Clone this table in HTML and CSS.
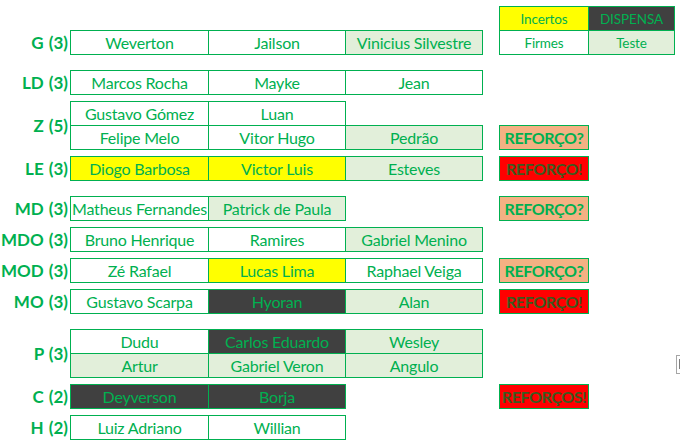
FILE: index.html
```html
<!DOCTYPE html>
<html lang="pt">
<head>
<meta charset="utf-8">
<title>Elenco</title>
<link rel="stylesheet" href="styles.css">
</head>
<body>
<div class="sheet">
  <div class="grp">
    <div class="blank"></div><div class="blank"></div><div class="blank"></div><div class="blank"></div><div class="blank"></div>
    <div class="cell leg yellow">Incertos</div>
    <div class="cell leg dark">DISPENSA</div>
    <div class="label">G (3)</div>
    <div class="cell">Weverton</div>
    <div class="cell">Jailson</div>
    <div class="cell light">Vinicius Silvestre</div>
    <div class="blank"></div>
    <div class="cell leg">Firmes</div>
    <div class="cell leg light">Teste</div>
  </div>

  <div class="grp gap16">
    <div class="label">LD (3)</div>
    <div class="cell">Marcos Rocha</div>
    <div class="cell">Mayke</div>
    <div class="cell">Jean</div>
  </div>

  <div class="grp gap7">
    <div class="label span2">Z (5)</div>
    <div class="cell">Gustavo Gómez</div>
    <div class="cell">Luan</div>
    <div class="blank"></div>
    <div class="blank"></div><div class="blank"></div><div class="blank"></div>
    <div class="cell">Felipe Melo</div>
    <div class="cell">Vitor Hugo</div>
    <div class="cell light">Pedrão</div>
    <div class="ref orange">REFORÇO?</div>
  </div>

  <div class="grp gap7">
    <div class="label">LE (3)</div>
    <div class="cell yellow">Diogo Barbosa</div>
    <div class="cell yellow">Victor Luis</div>
    <div class="cell light">Esteves</div>
    <div class="ref red">REFORÇO!</div>
  </div>

  <div class="grp gap16">
    <div class="label">MD (3)</div>
    <div class="cell">Matheus Fernandes</div>
    <div class="cell light">Patrick de Paula</div>
    <div class="blank"></div>
    <div class="ref orange">REFORÇO?</div>
  </div>

  <div class="grp gap7">
    <div class="label">MDO (3)</div>
    <div class="cell">Bruno Henrique</div>
    <div class="cell">Ramires</div>
    <div class="cell light">Gabriel Menino</div>
  </div>

  <div class="grp gap7">
    <div class="label">MOD (3)</div>
    <div class="cell">Zé Rafael</div>
    <div class="cell yellow">Lucas Lima</div>
    <div class="cell">Raphael Veiga</div>
    <div class="ref orange">REFORÇO?</div>
  </div>

  <div class="grp gap7">
    <div class="label">MO (3)</div>
    <div class="cell">Gustavo Scarpa</div>
    <div class="cell dark">Hyoran</div>
    <div class="cell light">Alan</div>
    <div class="ref red">REFORÇO!</div>
  </div>

  <div class="grp gap16">
    <div class="label span2">P (3)</div>
    <div class="cell">Dudu</div>
    <div class="cell dark">Carlos Eduardo</div>
    <div class="cell light">Wesley</div>
    <div class="blank"></div><div class="blank"></div><div class="blank"></div>
    <div class="cell light">Artur</div>
    <div class="cell light">Gabriel Veron</div>
    <div class="cell light">Angulo</div>
  </div>

  <div class="grp gap7">
    <div class="label">C (2)</div>
    <div class="cell dark">Deyverson</div>
    <div class="cell dark">Borja</div>
    <div class="blank"></div>
    <div class="ref red">REFORÇOS!</div>
  </div>

  <div class="grp gap7">
    <div class="label">H (2)</div>
    <div class="cell">Luiz Adriano</div>
    <div class="cell">Willian</div>
  </div>
</div>
<div class="paste"><span class="clip"></span></div>
</body>
</html>
```

FILE: styles.css
```css
html, body {
  margin: 0;
  padding: 0;
  background: #ffffff;
}
body {
  width: 680px;
  height: 446px;
  overflow: hidden;
  position: relative;
  font-family: Lato, "Open Sans", sans-serif;
  color: #00b050;
}
.sheet {
  display: flex;
  flex-direction: column;
  padding-top: 6px;
}
.grp {
  display: grid;
  grid-template-columns: 70px 138px 137px 137px 17px 89px 86px;
  grid-auto-rows: 24px;
}
.gap16 { margin-top: 16px; }
.gap7 { margin-top: 7px; }

.label {
  grid-column: 1;
  font-weight: bold;
  font-size: 17px;
  white-space: pre;
  display: flex;
  align-items: center;
  justify-content: flex-end;
  padding-right: 2px;
  word-spacing: 1px;
}
.label.span2 { grid-row: span 2; }

.cell {
  border: 1px solid #00b050;
  margin: 0 -1px -1px 0;
  background: #ffffff;
  display: flex;
  align-items: center;
  justify-content: center;
  font-size: 16px;
  letter-spacing: -0.2px;
  white-space: nowrap;
  overflow: hidden;
}
.cell.leg { font-size: 13.5px; letter-spacing: -0.1px; }
.yellow { background: #ffff00; }
.dark { background: #404040; }
.light { background: #e2efda; }

.ref {
  grid-column: 6;
  border: 1px solid #00b050;
  margin: 0 -1px -1px 0;
  display: flex;
  align-items: center;
  justify-content: center;
  font-weight: bold;
  font-size: 16px;
  letter-spacing: -0.4px;
  white-space: nowrap;
}
.ref.orange { background: #f4b183; color: #00b050; }
.ref.red { background: #ff0000; color: #3b5a1f; }

.paste {
  position: absolute;
  left: 676px;
  top: 355px;
  width: 18px;
  height: 17px;
  border: 1px solid #a6a6a6;
  background: #ffffff;
}
.clip {
  position: absolute;
  left: 2px;
  top: 3px;
  width: 2px;
  height: 10px;
  background: #7f7f7f;
}
```
